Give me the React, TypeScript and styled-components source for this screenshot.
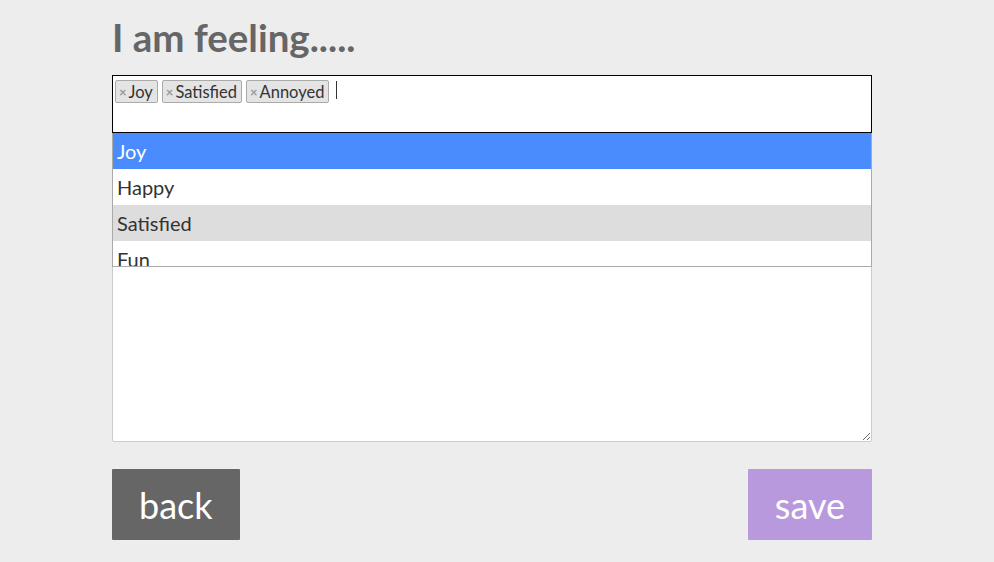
import styled, { createGlobalStyle } from 'styled-components';

const GlobalStyle = createGlobalStyle`
  body {
    margin: 0;
    background: #ededed;
    font-family: Lato, 'Open Sans', sans-serif;
  }
`;

const Page = styled.div`
  width: 760px;
  margin-left: 112px;
  padding-top: 13px;
`;

const Title = styled.h1`
  margin: 0 0 14px;
  font-size: 38.5px;
  line-height: 48px;
  font-weight: 700;
  color: #666666;
`;

const SelectWrap = styled.div`
  position: relative;
`;

const SelectBox = styled.div`
  display: flex;
  flex-wrap: wrap;
  align-items: flex-start;
  gap: 4px;
  height: 58px;
  padding: 4px 2px;
  box-sizing: border-box;
  background: white;
  border: 1px solid #000;
`;

const Tag = styled.span`
  display: flex;
  align-items: center;
  height: 23px;
  padding: 0 4px 0 3px;
  box-sizing: border-box;
  background: #e4e4e4;
  border: 1px solid #aaaaaa;
  border-radius: 2px;
  font-size: 16.5px;
  color: #333;
`;

const TagRemove = styled.span`
  font-size: 13px;
  font-weight: 700;
  color: #999;
  margin-right: 2px;
`;

const Caret = styled.span`
  width: 1px;
  height: 18px;
  margin: 1px 0 0 3px;
  background: #333;
`;

const Dropdown = styled.ul`
  position: absolute;
  top: 100%;
  left: 0;
  right: 0;
  height: 134px;
  margin: 0;
  padding: 0;
  list-style: none;
  overflow: hidden;
  background: white;
  border: 1px solid #aaaaaa;
  border-top: none;
  box-sizing: border-box;
  z-index: 2;
`;

const Option = styled.li<{ $state?: 'active' | 'selected' }>`
  height: 36px;
  line-height: 36px;
  padding-left: 4px;
  font-size: 20px;
  background: ${(p) =>
    p.$state === 'active' ? '#4a8cfe' : p.$state === 'selected' ? '#dddddd' : 'white'};
  color: ${(p) => (p.$state === 'active' ? 'white' : '#333')};
`;

const Notes = styled.textarea`
  display: block;
  width: 100%;
  height: 301px;
  margin-top: 8px;
  box-sizing: border-box;
  border: 1px solid #cccccc;
  border-radius: 2px;
  background: white;
`;

const ButtonRow = styled.div`
  display: flex;
  justify-content: space-between;
  margin-top: 27px;
`;

const Button = styled.button<{ $color: string }>`
  height: 71px;
  padding: 0 27px;
  border: none;
  border-radius: 1px;
  background: ${(p) => p.$color};
  color: white;
  font-family: Lato, 'Open Sans', sans-serif;
  font-size: 36px;
`;

const options = ['Joy', 'Happy', 'Satisfied', 'Fun'];

function App() {
  return (
    <>
      <GlobalStyle />
      <Page>
        <Title>I am feeling.....</Title>
        <SelectWrap>
          <SelectBox>
            {['Joy', 'Satisfied', 'Annoyed'].map((t) => (
              <Tag key={t}>
                <TagRemove>×</TagRemove>
                {t}
              </Tag>
            ))}
            <Caret />
          </SelectBox>
          <Dropdown>
            {options.map((o) => (
              <Option
                key={o}
                $state={o === 'Joy' ? 'active' : o === 'Satisfied' ? 'selected' : undefined}
              >
                {o}
              </Option>
            ))}
          </Dropdown>
        </SelectWrap>
        <Notes />
        <ButtonRow>
          <Button $color="#666666">back</Button>
          <Button $color="#b899de">save</Button>
        </ButtonRow>
      </Page>
    </>
  );
}

export default App;
